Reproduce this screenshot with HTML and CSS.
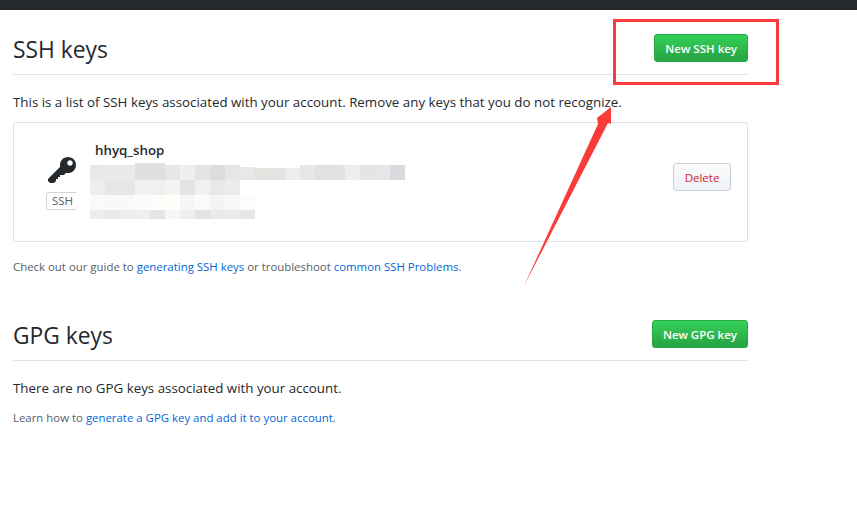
FILE: index.html
```html
<!DOCTYPE html>
<html lang="en">
<head>
<meta charset="utf-8">
<title>SSH and GPG keys</title>
<link rel="stylesheet" href="styles.css">
</head>
<body>
<div class="topbar"></div>
<main class="settings">
  <section class="ssh">
    <header class="section-head">
      <h2>SSH keys</h2>
      <a class="btn btn-green">New SSH key</a>
    </header>
    <p class="intro">This is a list of SSH keys associated with your account. Remove any keys that you do not recognize.</p>
    <div class="key-box">
      <div class="key-type">
        <svg class="key-icon" viewBox="0 0 14 16" width="28" height="32"><path fill="#24292e" fill-rule="evenodd" d="M12.83 2.17C12.08 1.42 11.14 1.03 10 1c-1.13.03-2.08.42-2.83 1.17S6.04 3.86 6.01 5c0 .3.03.59.09.89L0 12v1l1 1h2l1-1v-1h1v-1h1v-1h2l1.09-1.11c.3.08.59.11.91.11 1.14-.03 2.08-.42 2.83-1.17S13.97 6.14 14 5c-.03-1.14-.42-2.08-1.17-2.83zM11 5.38c-.77 0-1.38-.61-1.38-1.38 0-.77.61-1.38 1.38-1.38.77 0 1.38.61 1.38 1.38 0 .77-.61 1.38-1.38 1.38z"/></svg>
        <span class="badge">SSH</span>
      </div>
      <div class="key-info">
        <strong class="key-title">hhyq_shop</strong>
      </div>
      <a class="btn btn-delete">Delete</a>
    </div>
    <p class="note">Check out our guide to <a>generating SSH keys</a> or troubleshoot <a>common SSH Problems</a>.</p>
  </section>
  <section class="gpg">
    <header class="section-head">
      <h2>GPG keys</h2>
      <a class="btn btn-green">New GPG key</a>
    </header>
    <p class="intro">There are no GPG keys associated with your account.</p>
    <p class="note">Learn how to <a>generate a GPG key and add it to your account</a>.</p>
  </section>
</main>
<svg class="overlay" width="857" height="521" viewBox="0 0 857 521">
  <g shape-rendering="crispEdges">
    <rect x="76" y="172" width="16" height="44" fill="#fff"/>
    <rect x="90" y="165" width="15" height="15" fill="#e8e8e6"/><rect x="105" y="165" width="15" height="15" fill="#e9eaea"/><rect x="120" y="165" width="15" height="15" fill="#e9eae9"/><rect x="135" y="163" width="15" height="17" fill="#dfe0e0"/><rect x="150" y="163" width="15" height="17" fill="#dfe0e0"/><rect x="165" y="165" width="15" height="15" fill="#e6e7e9"/><rect x="180" y="165" width="15" height="15" fill="#efefef"/><rect x="195" y="165" width="15" height="15" fill="#e4e4e4"/><rect x="210" y="165" width="15" height="15" fill="#dcdcdc"/><rect x="225" y="165" width="15" height="15" fill="#e6e6e6"/><rect x="240" y="167" width="15" height="13" fill="#e8e8e8"/><rect x="255" y="168" width="15" height="12" fill="#e3e3e0"/><rect x="270" y="168" width="15" height="12" fill="#e2e3e5"/><rect x="285" y="168" width="15" height="12" fill="#ededf0"/><rect x="300" y="165" width="15" height="15" fill="#e9e7e4"/><rect x="315" y="165" width="15" height="15" fill="#dfe1e4"/><rect x="330" y="165" width="15" height="15" fill="#e2e2e3"/><rect x="345" y="165" width="15" height="15" fill="#eeeeec"/><rect x="360" y="165" width="15" height="15" fill="#e4e5e6"/><rect x="375" y="165" width="15" height="15" fill="#e4e6e8"/><rect x="390" y="165" width="15" height="15" fill="#dadbde"/>
    <rect x="90" y="180" width="15" height="15" fill="#eeeeee"/><rect x="105" y="180" width="15" height="15" fill="#e5e6e7"/><rect x="120" y="180" width="15" height="15" fill="#e5e6e7"/><rect x="135" y="180" width="15" height="15" fill="#f2f1f1"/><rect x="150" y="180" width="15" height="15" fill="#eff0f2"/><rect x="165" y="180" width="15" height="15" fill="#f5f4f1"/><rect x="180" y="180" width="15" height="15" fill="#e3e4e6"/><rect x="195" y="180" width="15" height="15" fill="#f0f1f2"/><rect x="210" y="180" width="15" height="15" fill="#e7e8e9"/><rect x="225" y="180" width="15" height="15" fill="#ebecee"/>
    <rect x="90" y="195" width="15" height="15" fill="#fafafa"/><rect x="105" y="195" width="15" height="15" fill="#f9f9f9"/><rect x="120" y="195" width="15" height="15" fill="#f9f9fa"/><rect x="135" y="195" width="15" height="15" fill="#fbfbfb"/><rect x="150" y="195" width="15" height="15" fill="#fdfdfc"/><rect x="165" y="195" width="15" height="15" fill="#fefefb"/><rect x="180" y="195" width="15" height="15" fill="#f5f6f6"/><rect x="195" y="195" width="15" height="15" fill="#fbfbfa"/><rect x="210" y="195" width="15" height="15" fill="#f4f4f5"/><rect x="225" y="195" width="15" height="15" fill="#f8f8f8"/><rect x="240" y="195" width="15" height="15" fill="#fcfcfc"/>
    <rect x="90" y="210" width="15" height="9" fill="#ecedee"/><rect x="105" y="210" width="15" height="9" fill="#e9eaea"/><rect x="120" y="210" width="15" height="9" fill="#eeeeef"/><rect x="135" y="210" width="15" height="9" fill="#efefef"/><rect x="150" y="210" width="15" height="9" fill="#e3e4e6"/><rect x="165" y="210" width="15" height="9" fill="#f6f6f7"/><rect x="180" y="210" width="15" height="9" fill="#eeefef"/><rect x="195" y="210" width="15" height="9" fill="#e2e3e5"/><rect x="210" y="210" width="15" height="9" fill="#e9eaeb"/><rect x="225" y="210" width="15" height="9" fill="#e9eaeb"/><rect x="240" y="210" width="15" height="9" fill="#e6e7e9"/>
  </g>
  <rect x="614.5" y="20.5" width="163" height="63" fill="none" stroke="#fb3a3a" stroke-width="3"/>
  <polygon points="524,286 598,124 597,118 611,107 611,124 608,123" fill="#fb3a3a"/>
</svg>
</body>
</html>
```
FILE: styles.css
```css
* { box-sizing: border-box; }
html, body { margin: 0; padding: 0; background: #fff; }
body {
  position: relative;
  width: 857px;
  height: 521px;
  overflow: hidden;
  font-family: "Open Sans", "Noto Sans", sans-serif;
  font-size: 13.33px;
  color: #24292e;
}
.topbar { height: 10px; background: #24292e; }
.settings { width: 748px; padding-left: 13px; }
.section-head {
  display: flex;
  justify-content: space-between;
  align-items: center;
  height: 41px;
  padding-bottom: 12px;
  border-bottom: 1px solid #e1e4e8;
}
.ssh .section-head { margin-top: 24px; }
.gpg { margin-top: 45px; }
h2 { margin: 0; padding-top: 3px; font-size: 22.8px; font-weight: 400; line-height: 28px; }
.btn {
  display: flex;
  align-items: center;
  justify-content: center;
  height: 28px;
  border-radius: 3px;
  font-size: 11.5px;
  font-weight: 600;
}
.btn-green {
  padding: 0 10px;
  color: #fff;
  background: linear-gradient(#34d058, #28a745 90%);
  border: 1px solid #28a745;
}
.intro { margin: 0; padding-top: 17px; line-height: 20px; }
.key-box {
  display: flex;
  align-items: flex-start;
  height: 120px;
  margin-top: 10px;
  padding: 0 16px 0 32px;
  border: 1px solid #dfe2e5;
  border-radius: 3px;
}
.key-type { display: flex; flex-direction: column; align-items: flex-start; width: 49px; margin-top: 32px; }
.key-icon { margin-left: 2px; }
.badge {
  width: 36px;
  height: 18px;
  margin-top: 5px;
  padding-left: 5px;
  border: 1px solid #d1d5da;
  border-radius: 3px;
  font-size: 11.5px;
  line-height: 16px;
  color: #586069;
}
.key-info { flex: 1; padding-top: 17px; }
.key-title { font-size: 13.33px; font-weight: 600; line-height: 20px; }
.btn-delete {
  width: 58px;
  margin-top: 40px;
  color: #cb2431;
  background: linear-gradient(#fafbfc, #eff3f6 90%);
  border: 1px solid #ccd0d5;
  font-weight: 400;
}
.note { margin: 0; font-size: 11.42px; line-height: 16px; color: #586069; }
.ssh .note { padding-top: 17px; }
.gpg .note { padding-top: 12px; }
.note a { color: #0366d6; }
.overlay { position: absolute; left: 0; top: 0; pointer-events: none; }
```
